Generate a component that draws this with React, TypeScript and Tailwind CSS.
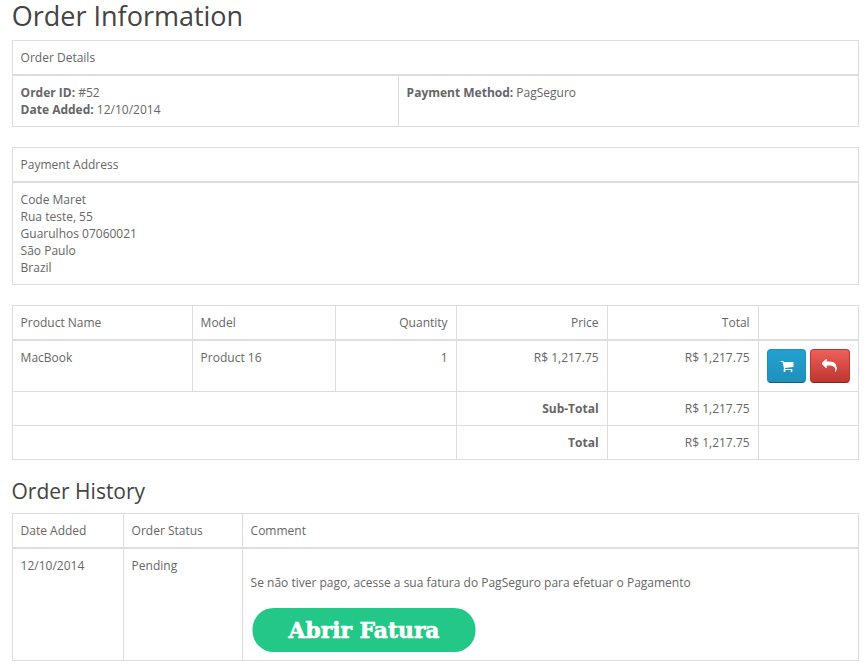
import type { ReactNode } from "react";

function Table({ children, className = "" }: { children: ReactNode; className?: string }) {
  return (
    <div role="table" className={`w-[847px] border-l border-t border-[#ddd] ${className}`}>
      {children}
    </div>
  );
}

function Row({ children, className = "h-[34px]" }: { children: ReactNode; className?: string }) {
  return (
    <div role="row" className={`flex ${className}`}>
      {children}
    </div>
  );
}

function Cell({
  children,
  head = false,
  className = "",
}: {
  children?: ReactNode;
  head?: boolean;
  className?: string;
}) {
  return (
    <div
      role="cell"
      className={`shrink-0 border-r border-[#ddd] py-2 pl-[7.6px] pr-[8.4px] ${head ? "border-b-2" : "border-b"} ${className}`}
    >
      {children}
    </div>
  );
}

function CartIcon() {
  return (
    <svg className="ml-px" width="14" height="14" viewBox="0 0 1664 1792" fill="currentColor">
      <path d="M640 1536q0 52-38 90t-90 38-90-38-38-90 38-90 90-38 90 38 38 90zm896 0q0 52-38 90t-90 38-90-38-38-90 38-90 90-38 90 38 38 90zm128-1088v512q0 24-16.5 42.5t-40.5 21.5l-1044 122q13 60 13 70 0 16-24 64h920q26 0 45 19t19 45-19 45-45 19h-1024q-26 0-45-19t-19-45q0-11 8-31.5t16-36 21.5-40 15.5-29.5l-177-823h-204q-26 0-45-19t-19-45 19-45 45-19h256q16 0 28.5 6.5t19.5 15.5 13 24.5 8 26 5.5 29.5 4.5 26h1201q26 0 45 19t19 45z" />
    </svg>
  );
}

function ReplyIcon() {
  return (
    <svg width="15" height="14" viewBox="0 0 1792 1792" preserveAspectRatio="none" fill="currentColor">
      <path d="M1792 1120q0 166-127 451-3 7-10.5 24t-13.5 30-13 22q-12 17-28 17-15 0-23.5-10t-8.5-25q0-9 2.5-26.5t2.5-23.5q5-68 5-123 0-112-19.5-200.5t-54-153.5-89-111.5-117-76.5-145.5-47-166.5-23.5-190.5-7h-224v256q0 26-19 45t-45 19-45-19l-512-512q-19-19-19-45t19-45l512-512q19-19 45-19t45 19 19 45v256h224q713 0 875 403 53 134 53 333z" />
    </svg>
  );
}

export default function App() {
  return (
    <main className="h-[668px] w-[868px] overflow-hidden bg-white pl-3 font-['Open_Sans','Noto_Sans',sans-serif] text-[12px] leading-[17px] text-[#666]">
      <h1 className="-ml-[0.3px] h-10 text-[27px] leading-[32px] text-[#444]">Order Information</h1>

      <Table>
        <Row className="h-[35px]">
          <Cell head className="w-[846px]">Order Details</Cell>
        </Row>
        <Row className="h-[51px]">
          <Cell className="w-[386px]">
            <b>Order ID:</b> #52
            <br />
            <b>Date Added:</b> 12/10/2014
          </Cell>
          <Cell className="w-[460px]">
            <b>Payment Method:</b> PagSeguro
          </Cell>
        </Row>
      </Table>

      <Table className="mt-5">
        <Row className="h-[35px]">
          <Cell head className="w-[846px]">Payment Address</Cell>
        </Row>
        <Row className="h-[102px]">
          <Cell className="w-[846px]">
            Code Maret
            <br />
            Rua teste, 55
            <br />
            Guarulhos 07060021
            <br />
            São Paulo
            <br />
            Brazil
          </Cell>
        </Row>
      </Table>

      <Table className="mt-5">
        <Row className="h-[35px]">
          <Cell head className="w-[180px]">Product Name</Cell>
          <Cell head className="w-[143px]">Model</Cell>
          <Cell head className="w-[121px] text-right">Quantity</Cell>
          <Cell head className="w-[151px] text-right">Price</Cell>
          <Cell head className="w-[151px] text-right">Total</Cell>
          <Cell head className="w-[100px]" />
        </Row>
        <Row className="h-[51px]">
          <Cell className="w-[180px]">MacBook</Cell>
          <Cell className="w-[143px]">Product 16</Cell>
          <Cell className="w-[121px] text-right">1</Cell>
          <Cell className="w-[151px] text-right">R$ 1,217.75</Cell>
          <Cell className="w-[151px] text-right">R$ 1,217.75</Cell>
          <Cell className="w-[100px]">
            <div className="ml-[0.4px] flex gap-1">
              <button
                aria-label="Reorder"
                className="flex h-[34px] w-[39px] shrink-0 items-center justify-center rounded-[4px] border border-[#1f90bb] border-b-[#145e7a] bg-linear-to-b from-[#23a1d1] to-[#1f90bb] text-white"
              >
                <CartIcon />
              </button>
              <button
                aria-label="Return"
                className="flex h-[34px] w-[40px] shrink-0 items-center justify-center rounded-[4px] border border-[#bd362f] border-b-[#802420] bg-linear-to-b from-[#ee5f5b] to-[#bd362f] text-white"
              >
                <ReplyIcon />
              </button>
            </div>
          </Cell>
        </Row>
        <Row>
          <Cell className="w-[444px]" />
          <Cell className="w-[151px] text-right font-bold">Sub-Total</Cell>
          <Cell className="w-[151px] text-right">R$ 1,217.75</Cell>
          <Cell className="w-[100px]" />
        </Row>
        <Row>
          <Cell className="w-[444px]" />
          <Cell className="w-[151px] text-right font-bold">Total</Cell>
          <Cell className="w-[151px] text-right">R$ 1,217.75</Cell>
          <Cell className="w-[100px]" />
        </Row>
      </Table>

      <h2 className="-ml-[0.5px] mt-5 h-[33px] text-[21px] leading-[23px] text-[#444]">Order History</h2>

      <Table>
        <Row className="h-[35px]">
          <Cell head className="w-[111px]">Date Added</Cell>
          <Cell head className="w-[119px]">Order Status</Cell>
          <Cell head className="w-[616px]">Comment</Cell>
        </Row>
        <Row className="h-[112px]">
          <Cell className="w-[111px]">12/10/2014</Cell>
          <Cell className="w-[119px]">Pending</Cell>
          <Cell className="w-[616px]">
            <p className="mt-[17px]">
              Se não tiver pago, acesse a sua fatura do PagSeguro para efetuar o Pagamento
            </p>
            <svg className="ml-[1.4px] mt-[17px] block" width="224" height="44" viewBox="0 0 224 44">
              <rect x="0.5" width="223" height="44" rx="21" fill="#23c889" />
              <text
                x="36.5"
                y="30.3"
                textLength="151"
                lengthAdjust="spacingAndGlyphs"
                fill="#fff"
                stroke="#fff"
                strokeWidth="0.6"
                fontSize="22"
                fontWeight="700"
                fontFamily="'DejaVu Serif', serif"
              >
                Abrir Fatura
              </text>
            </svg>
          </Cell>
        </Row>
      </Table>
    </main>
  );
}
